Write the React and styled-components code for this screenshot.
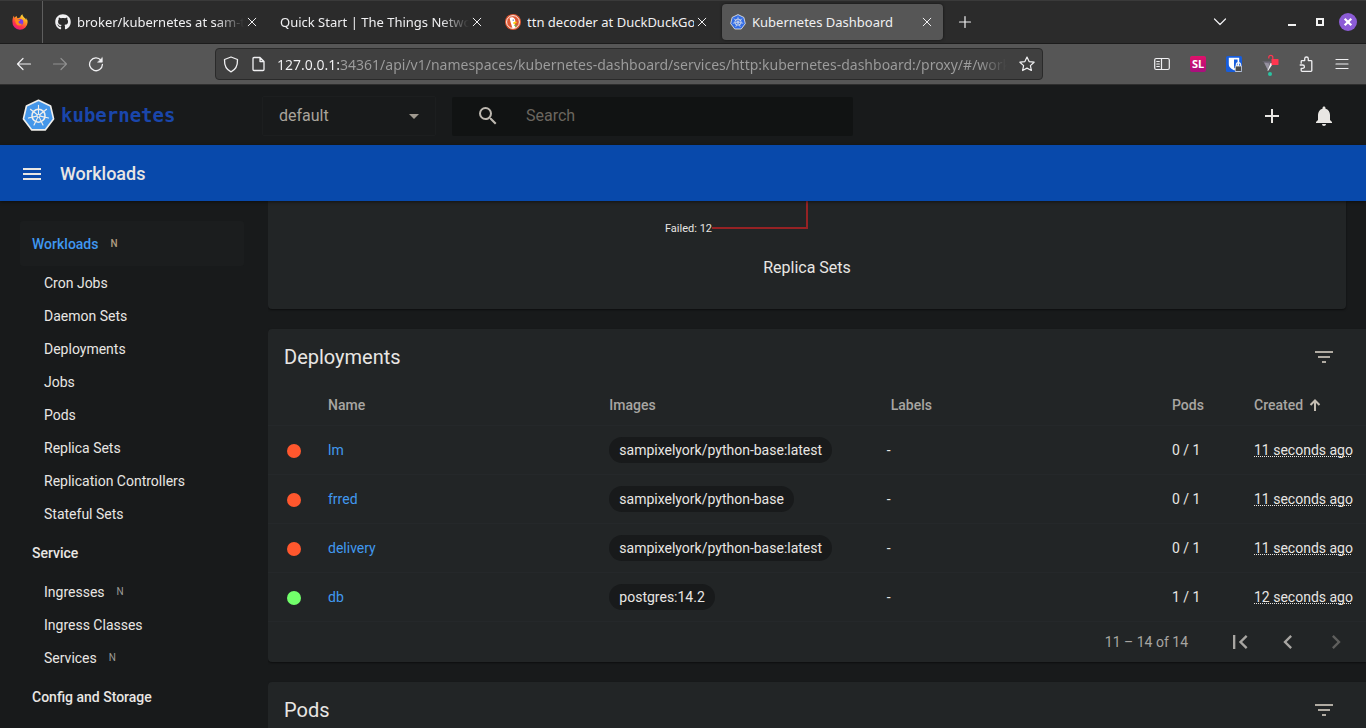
import React from "react";
import styled, { createGlobalStyle, css } from "styled-components";
import { FaGithub } from "react-icons/fa";
import {
  MdAdd,
  MdArrowDropDown,
  MdChevronLeft,
  MdChevronRight,
  MdFilterList,
  MdFirstPage,
  MdMenu,
  MdNotifications,
  MdSearch,
} from "react-icons/md";

const GlobalStyle = createGlobalStyle`
  *, *::before, *::after { box-sizing: border-box; }
  body {
    margin: 0;
    background: #181a1b;
    color: #e8e6e3;
    font: 14px/20px Roboto, "Liberation Sans", sans-serif;
  }
  button, input, select { font: inherit; color: inherit; }
  a { color: inherit; text-decoration: none; }
`;

const Shell = styled.div`
  display: flex;
  flex-direction: column;
  height: 100vh;
  overflow: hidden;
`;

/* ---------- browser window ---------- */

const Chrome = styled.div`
  flex: none;
  font-family: "Noto Sans", "Open Sans", sans-serif;
  color: #f0f0f2;
`;

const TabStrip = styled.div`
  display: flex;
  align-items: center;
  height: 44px;
  background: #2b2b2b;
  border-top: 1px solid #3a3a3a;
  border-bottom: 1px solid #1c1c1c;
`;

const PinnedTab = styled.button`
  display: flex;
  align-items: center;
  justify-content: center;
  align-self: stretch;
  width: 43px;
  padding: 0 3px 0 0;
  margin-right: 4px;
  background: none;
  border: 0;
  border-right: 1px solid #5e5e5e;
`;

const Tab = styled.div`
  display: flex;
  align-items: center;
  flex: 0 1 221px;
  min-width: 0;
  height: 36px;
  margin-right: 4px;
  padding: 0 8px;
  border-radius: 4px;
  ${(p) =>
    p.$active &&
    css`
      background: #565656;
      box-shadow: 0 0 3px rgba(0, 0, 0, 0.6);
    `}
`;

const TabTitle = styled.button`
  display: flex;
  align-items: center;
  gap: 6px;
  flex: 1;
  min-width: 0;
  padding: 0;
  background: none;
  border: 0;
  font-size: 13px;
  line-height: 20px;
  text-align: left;
  svg { flex: none; }
  span {
    flex: 1;
    min-width: 0;
    overflow: hidden;
    white-space: nowrap;
    ${(p) =>
      p.$fade &&
      css`
        mask-image: linear-gradient(to left, transparent, #000 28px);
      `}
  }
`;

const PlainButton = styled.button`
  display: flex;
  flex: none;
  align-items: center;
  justify-content: center;
  width: ${(p) => p.$w || 36}px;
  height: ${(p) => p.$h || p.$w || 36}px;
  padding: 0;
  background: none;
  border: 0;
  color: ${(p) => p.$color || "inherit"};
`;

const WindowControls = styled.div`
  display: flex;
  align-items: center;
  margin-left: auto;
  padding-right: 4px;
`;

const ListAllTabs = styled(PlainButton)`
  margin-right: 40px;
`;

const Toolbar = styled.div`
  display: flex;
  align-items: center;
  height: 41px;
  padding: 0 6px;
  background: #565656;
  border-bottom: 1px solid #2e2e2e;
`;

const FlexSpace = styled.div`
  flex: 0 1 101px;
`;

const UrlBar = styled.div`
  display: flex;
  align-items: center;
  flex: 1;
  min-width: 0;
  height: 32px;
  padding: 0 7px;
  gap: 12px;
  background: #404040;
  border: 1px solid #2a2a2a;
  border-radius: 4px;
  svg { flex: none; }
`;

const UrlInput = styled.input`
  flex: 1;
  min-width: 0;
  height: 24px;
  padding: 0;
  border: 0;
  outline: 0;
  font-size: 14px;
  color: transparent;
  background: linear-gradient(
    90deg,
    #f4f4f6 0 62px,
    #9d9d9d 62px calc(100% - 28px),
    transparent
  );
  background-clip: text;
  -webkit-background-clip: text;
`;

/* ---------- dashboard header ---------- */

const TopBar = styled.header`
  display: flex;
  flex: none;
  align-items: center;
  height: 60px;
  padding: 2px 22px 0;
`;

const Brand = styled.a`
  display: flex;
  align-items: center;
  gap: 6px;
  width: 240px;
  padding-bottom: 2px;
  color: #1a46ab;
  font: bold 19px/24px "DejaVu Sans Mono", monospace;
`;

const NamespaceBox = styled.div`
  display: grid;
  align-items: center;
  width: 174px;
  height: 40px;
  margin-right: 16px;
  border: 1px solid #1c1e1f;
  border-radius: 2px;
  > * { grid-area: 1 / 1; }
  svg {
    justify-self: end;
    margin-right: 9px;
    color: #a09a90;
    pointer-events: none;
  }
`;

const NamespaceSelect = styled.select`
  appearance: none;
  width: 100%;
  height: 38px;
  padding: 0 16px;
  background: transparent;
  border: 0;
  font-size: 16px;
  color: #a9a49c;
`;

const SearchBox = styled.form`
  display: flex;
  align-items: center;
  flex: 0 1 401px;
  height: 39px;
  padding-left: 24px;
  gap: 26px;
  background: #111313;
  border-radius: 2px;
  color: #bdb8b0;
  svg { flex: none; }
`;

const SearchInput = styled.input`
  flex: 1;
  min-width: 0;
  padding: 0;
  background: none;
  border: 0;
  outline: 0;
  font-size: 16px;
  &::placeholder { color: #6b665f; opacity: 1; }
`;

const TopActions = styled.div`
  display: flex;
  gap: 12px;
  margin-left: auto;
`;

const TitleBar = styled.div`
  display: flex;
  flex: none;
  align-items: center;
  gap: 8px;
  height: 56px;
  padding: 2px 12px 0;
  background: #0849ab;
  z-index: 1;
  box-shadow: 0 1px 3px rgba(0, 0, 0, 0.5);
`;

const PageTitle = styled.h1`
  margin: 0;
  font-size: 18px;
  font-weight: 500;
  line-height: 24px;
`;

/* ---------- sidebar ---------- */

const Columns = styled.div`
  display: flex;
  flex: 1;
  min-height: 0;
`;

const Sidebar = styled.nav`
  flex: none;
  width: 268px;
  padding: 20px 24px 0 20px;
  overflow: hidden;
`;

const SectionLink = styled.a`
  display: flex;
  align-items: center;
  gap: 12px;
  height: 45px;
  padding: 0 12px;
  border-radius: 3px;
  font-weight: 500;
  color: ${(p) => (p.$active ? "#3f97f0" : "#e8e6e3")};
  background: ${(p) => (p.$active ? "#1b1d1e" : "transparent")};
`;

const NavLink = styled.a`
  display: flex;
  align-items: center;
  gap: 12px;
  height: 33px;
  padding: 0 24px;
`;

const Scope = styled.small`
  font-size: 10px;
  color: ${(p) => (p.$active ? "#b09c80" : "#9c9a96")};
`;

/* ---------- content ---------- */

const Content = styled.main`
  display: flex;
  flex-direction: column;
  flex: 1;
  gap: 20px;
  min-width: 0;
  overflow: hidden;
`;

const Card = styled.section`
  flex: none;
  background: #222526;
  border-radius: 4px 0 0 4px;
  box-shadow: 0 1px 2px rgba(0, 0, 0, 0.5);
`;

const StatusCard = styled(Card)`
  margin-right: 20px;
  padding-bottom: 29px;
  border-radius: 0 0 4px 4px;
`;

const Leader = styled.div`
  display: flex;
  align-items: flex-end;
  justify-content: flex-end;
  width: 50%;
  height: 35px;
  font-size: 11px;
  line-height: 14px;
  svg { margin: 0 -1px 7px 0; }
`;

const ChartTitle = styled.h2`
  margin: 0;
  padding: 20px 0 0;
  font-size: 16px;
  font-weight: 400;
  line-height: 24px;
  text-align: center;
`;

const CardHeader = styled.header`
  display: flex;
  align-items: center;
  justify-content: space-between;
  height: 56px;
  padding: 0 22px 0 16px;
`;

const CardTitle = styled.h2`
  margin: 0;
  font-size: 20px;
  font-weight: 400;
  line-height: 28px;
`;

const Table = styled.table`
  width: 100%;
  table-layout: fixed;
  border-collapse: separate;
  border-spacing: 0;
  text-align: left;
  white-space: nowrap;
  th, td {
    padding: 0;
    border-bottom: 1px solid #25282a;
  }
  th {
    height: 41px;
    font-weight: 500;
    color: #a8a6a2;
  }
  td { height: 49px; }
`;

const Col = styled.col`
  width: ${(p) => (p.$w ? `${p.$w}px` : "auto")};
`;

const SortButton = styled.button`
  display: flex;
  align-items: center;
  gap: 6px;
  padding: 0;
  background: none;
  border: 0;
  font-weight: 500;
`;

const Dot = styled.span`
  display: block;
  width: 14px;
  height: 14px;
  margin: 2px 0 0 19px;
  border-radius: 50%;
  background: ${(p) => (p.$ok ? "#72ff6b" : "#ff572d")};
`;

const NameLink = styled.a`
  color: #4199f0;
`;

const Chip = styled.span`
  display: inline-block;
  height: 26px;
  padding: 0 10px;
  border-radius: 13px;
  background: #181a1b;
  line-height: 26px;
`;

const DashCell = styled.td`
  text-indent: -4px;
`;

const Age = styled.time`
  text-decoration: underline dotted 1px;
  text-decoration-skip-ink: none;
  text-underline-offset: 1px;
`;

const Paginator = styled.footer`
  display: flex;
  align-items: center;
  justify-content: flex-end;
  height: 40px;
  padding-right: 6px;
  color: #a8a6a2;
  p { margin: 0 28px 0 0; }
`;

/* ---------- drawings ---------- */

const stroke = { fill: "none", stroke: "currentColor", strokeLinecap: "round", strokeLinejoin: "round" };

const CloseIcon = () => (
  <svg width="10" height="10" viewBox="0 0 10 10" {...stroke} strokeWidth="1">
    <path d="M1.2 1.2 8.8 8.8M8.8 1.2 1.2 8.8" />
  </svg>
);

const FirefoxIcon = () => (
  <svg width="16" height="16" viewBox="0 0 16 16">
    <defs>
      <linearGradient id="fx" x1="0.85" y1="0" x2="0.25" y2="1">
        <stop offset="0" stopColor="#fff44f" />
        <stop offset="0.35" stopColor="#ffa01e" />
        <stop offset="0.7" stopColor="#ff3647" />
        <stop offset="1" stopColor="#e31587" />
      </linearGradient>
    </defs>
    <path d="M15.4 6.2c-.4-1-1.200-2-1.800-2.300.5 1 .8 1.800.8 2.400C13.500 3.900 10.600 3.200 10.400.3 9 1 8.300 2.500 8.200 3.600c-.9.1-1.600.3-2.200.7C5 3.900 4.700 3 4.800 2c-1 .5-1.800 1.200-2.300 1.800C2 3.300 2 2.300 2.200 1.600 1 2.800.4 5.200.4 7.800a7.600 7.600 0 0 0 15.200.6c0-.8 0-1.500-.2-2.200z" fill="url(#fx)" />
    <circle cx="8.200" cy="8" r="3.100" fill="#7a3bea" />
    <path d="M3 5.400c1-.6 2.500-.5 3.600.1.700.2 1.300.3 1.600.8-.2.700-1.400.8-1.700 1.600.2 1.500 1.700 2.200 3.300 1.500 0 1.400-1.300 2.200-2.800 2.100C4.700 11.400 3.300 9.500 3 5.400z" fill="#ff8a1a" />
  </svg>
);

const DuckIcon = () => (
  <svg width="16" height="16" viewBox="0 0 16 16">
    <circle cx="8" cy="8" r="8" fill="#de5833" />
    <circle cx="8" cy="8" r="6.400" fill="none" stroke="#fff" strokeWidth=".9" />
    <path d="M4.600 4c1.200-1.100 3.800-.9 4.800.4.800.9 1 2 .9 3.500L9.600 10l.9 3.800-3 .5C6.500 11 5.200 7.400 4.600 4z" fill="#fff" />
    <path d="M8.600 8.200c1.300-.5 2.700-.6 3.400-.2.200.5-1 1-2.600 1.200.6.500 1.600.3 1.800.6-.3.600-2.200.6-2.800 0-.4-.5-.3-1.200.2-1.600z" fill="#fdd20a" />
    <circle cx="8.200" cy="6.100" r=".7" fill="#2d4f8e" />
    <path d="m8.700 11.400 2.600-.8v2.400z" fill="#65bc46" />
  </svg>
);

const HEPTAGON = "16,1.200 27.700,6.800 30.600,19.300 22.500,30 9.500,30 1.400,19.300 4.300,6.800";

const KubernetesIcon = ({ size, fill }) => (
  <svg width={size} height={size} viewBox="0 0 32 32" fill="none" stroke="#f0efec">
    <polygon points={HEPTAGON} fill={fill} strokeWidth="1.600" strokeLinejoin="round" />
    <circle cx="16" cy="16.200" r="6.300" strokeWidth="1.500" />
    {[0, 1, 2, 3, 4, 5, 6].map((i) => (
      <path key={i} d="M16 14.400V6.200" strokeWidth="1.100" strokeLinecap="round" transform={`rotate(${(i * 360) / 7} 16 16.200)`} />
    ))}
    <circle cx="16" cy="16.200" r="1.500" strokeWidth="1" />
  </svg>
);

const ArrowIcon = ({ flip }) => (
  <svg width="16" height="16" viewBox="0 0 16 16" {...stroke} strokeWidth="1.200">
    <path d={flip ? "M1.500 8h13M9 2.500 14.500 8 9 13.500" : "M14.500 8h-13M7 2.500 1.500 8 7 13.500"} />
  </svg>
);

const ReloadIcon = () => (
  <svg width="16" height="16" viewBox="0 0 16 16" {...stroke} strokeWidth="1.300">
    <path d="M13 4.300A6.400 6.400 0 1 0 14.400 8.500" />
    <path d="M14.300 1.800v4.400H9.900z" fill="currentColor" strokeWidth=".6" />
  </svg>
);

const ShieldIcon = () => (
  <svg width="16" height="17" viewBox="0 0 16 17" {...stroke} strokeWidth="1.300">
    <path d="M8 1 14.500 3.500c.2 5.500-1.300 10-6.500 12.300C2.800 13.500 1.300 9 1.500 3.500z" />
  </svg>
);

const PageIcon = () => (
  <svg width="14" height="16" viewBox="0 0 14 16" {...stroke} strokeWidth="1.300">
    <path d="M3 1.500H9L13 5.500v8a1 1 0 0 1-1 1h-9a1 1 0 0 1-1-1v-11a1 1 0 0 1 1-1zM9 1.500v4h4" />
  </svg>
);

const StarIcon = () => (
  <svg width="16" height="16" viewBox="0 0 16 16" {...stroke} strokeWidth="1.200">
    <path d="m8 1 2.100 4.600 5 .6-3.700 3.400 1 4.900L8 12.100l-4.400 2.400 1-4.900L.9 6.200l5-.6z" />
  </svg>
);

const SidebarIcon = () => (
  <svg width="16" height="16" viewBox="0 0 16 16" {...stroke} strokeWidth="1.200">
    <rect x=".7" y="2.500" width="14.600" height="11" rx="1.500" />
    <path d="M7.500 2.500v11M2.800 5.500h2.500M2.800 8h2.500M2.800 10.500h2.500" />
  </svg>
);

const SlBadge = styled.span`
  width: 16px;
  height: 16px;
  border-radius: 2px;
  background: linear-gradient(#e0116a, #a80f7e);
  color: #fff;
  font: bold 11px/16px "Noto Sans", sans-serif;
  text-align: center;
`;

const BitwardenIcon = () => (
  <svg width="16" height="16" viewBox="0 0 16 16">
    <rect width="16" height="16" rx="1.500" fill="#175ddc" />
    <path d="M2.800 1.800h10.400v6.400c0 3.300-3.200 5-5.200 6-2-1-5.200-2.700-5.200-6z" fill="#fff" />
    <path d="M8 3.400h3.600v4.800c0 2-1.900 3.400-3.600 4.300z" fill="#175ddc" />
    <path d="M10.300 10.500V8.800a2.200 2.200 0 0 1 4.400 0v1.700" fill="none" stroke="#f2f2f2" strokeWidth="1.100" />
    <rect x="9.200" y="10" width="6.500" height="5.600" rx=".8" fill="#4a4a4a" stroke="#f2f2f2" strokeWidth=".8" />
  </svg>
);

const FilterExtensionIcon = () => (
  <svg width="18" height="24" viewBox="0 0 18 24">
    <path d="M1 9.500h9.500L8 12.500z" fill="#716c7c" />
    <path d="m3 10.500 5.500 1-1.500 7z" fill="#96919f" />
    <path d="m12 11.500-5 7.500-.5-.5 3-7.500z" fill="#efedf3" />
    <path d="M7.800 6.500V5.300a2 2 0 0 1 4 0V7" fill="none" stroke="#ff3650" strokeWidth="1.200" />
    <rect x="10.500" y="7" width="7" height="6" rx=".6" fill="#ff3650" />
    <circle cx="9" cy="22" r="2" fill="#2ac3a2" />
  </svg>
);

const PuzzleIcon = () => (
  <svg width="16" height="16" viewBox="0 0 16 16" {...stroke} strokeWidth="1.300">
    <path d="M3.200 7.200V5.400a.8.8 0 0 1 .8-.8h2.700V2.800a1.800 1.800 0 0 1 3.600 0v1.800h2.700a.8.8 0 0 1 .8.800v9.100a.8.800 0 0 1-.8.800H4a.8.800 0 0 1-.8-.8v-2.100h1.500a1.600 1.600 0 0 0 0-3.400H2.200" />
  </svg>
);

const HamburgerIcon = () => (
  <svg width="14" height="14" viewBox="0 0 14 14" {...stroke} strokeWidth="1.200">
    <path d="M1 2.500h12M1 7h12M1 11.500h12" />
  </svg>
);

const PlusIcon = () => (
  <svg width="14" height="14" viewBox="0 0 14 14" {...stroke} strokeWidth="1.200">
    <path d="M7 1.500v11M1.500 7h11" />
  </svg>
);

const ChevronDownIcon = () => (
  <svg width="14" height="10" viewBox="0 0 14 10" {...stroke} strokeWidth="1.200">
    <path d="m1.500 2 5.500 5.500L12.500 2" />
  </svg>
);

const SortUpIcon = () => (
  <svg width="12" height="12" viewBox="0 0 12 12" fill="none" stroke="#c4bdb2" strokeWidth="2">
    <path d="M6 12V1.500M1.500 6 6 1.500 10.500 6" />
  </svg>
);

const MinimizeIcon = () => (
  <svg width="8" height="8" viewBox="0 0 8 8">
    <path d="M0 6h8v2H0z" fill="#f2f2f2" />
  </svg>
);

const MaximizeIcon = () => (
  <svg width="8" height="8" viewBox="0 0 8 8">
    <rect x="1" y="1" width="6" height="6" fill="none" stroke="#f2f2f2" strokeWidth="2" />
  </svg>
);

const CloseWindowIcon = () => (
  <svg width="18" height="18" viewBox="0 0 18 18">
    <circle cx="9" cy="9" r="9" fill="#8c5cd6" />
    <path d="m5.700 5.700 6.600 6.600m0-6.600-6.600 6.600" stroke="#fff" strokeWidth="2.200" />
  </svg>
);

/* ---------- data ---------- */

const tabs = [
  { title: "broker/kubernetes at sam-test", icon: <FaGithub size={16} />, fade: true },
  { title: "Quick Start | The Things Network", fade: true },
  { title: "ttn decoder at DuckDuckGo", icon: <DuckIcon /> },
  { title: "Kubernetes Dashboard", icon: <KubernetesIcon size={16} fill="#326ce5" />, active: true },
];

const nav = [
  {
    title: "Workloads",
    scoped: true,
    active: true,
    items: [
      ["Cron Jobs"],
      ["Daemon Sets"],
      ["Deployments"],
      ["Jobs"],
      ["Pods"],
      ["Replica Sets"],
      ["Replication Controllers"],
      ["Stateful Sets"],
    ],
  },
  { title: "Service", items: [["Ingresses", true], ["Ingress Classes"], ["Services", true]] },
  { title: "Config and Storage", items: [] },
];

const deployments = [
  { name: "lm", image: "sampixelyork/python-base:latest", pods: "0 / 1", age: "11 seconds ago" },
  { name: "frred", image: "sampixelyork/python-base", pods: "0 / 1", age: "11 seconds ago" },
  { name: "delivery", image: "sampixelyork/python-base:latest", pods: "0 / 1", age: "11 seconds ago" },
  { name: "db", image: "postgres:14.2", pods: "1 / 1", age: "12 seconds ago", ok: true },
];

const url =
  "127.0.0.1:34361/api/v1/namespaces/kubernetes-dashboard/services/http:kubernetes-dashboard:/proxy/#/workloads?namespace=default";

function BrowserChrome() {
  return (
    <Chrome>
      <TabStrip>
        <PinnedTab aria-label="Firefox View"><FirefoxIcon /></PinnedTab>
        {tabs.map((t) => (
          <Tab key={t.title} $active={t.active}>
            <TabTitle $fade={t.fade}>
              {t.icon}
              <span>{t.title}</span>
            </TabTitle>
            <PlainButton $w={16} aria-label="Close tab"><CloseIcon /></PlainButton>
          </Tab>
        ))}
        <PlainButton aria-label="New tab"><PlusIcon /></PlainButton>
        <WindowControls>
          <ListAllTabs aria-label="List all tabs"><ChevronDownIcon /></ListAllTabs>
          <PlainButton $w={28} aria-label="Minimize"><MinimizeIcon /></PlainButton>
          <PlainButton $w={28} aria-label="Maximize"><MaximizeIcon /></PlainButton>
          <PlainButton $w={28} aria-label="Close window"><CloseWindowIcon /></PlainButton>
        </WindowControls>
      </TabStrip>
      <Toolbar>
        <PlainButton aria-label="Back"><ArrowIcon /></PlainButton>
        <PlainButton aria-label="Forward" $color="#8f8f8f"><ArrowIcon flip /></PlainButton>
        <PlainButton aria-label="Reload"><ReloadIcon /></PlainButton>
        <FlexSpace />
        <UrlBar>
          <ShieldIcon />
          <PageIcon />
          <UrlInput aria-label="Address" defaultValue={url} spellCheck={false} />
          <StarIcon />
        </UrlBar>
        <FlexSpace />
        <PlainButton aria-label="Sidebars"><SidebarIcon /></PlainButton>
        <PlainButton><SlBadge>SL</SlBadge></PlainButton>
        <PlainButton aria-label="Bitwarden"><BitwardenIcon /></PlainButton>
        <PlainButton aria-label="Content filter"><FilterExtensionIcon /></PlainButton>
        <PlainButton aria-label="Extensions"><PuzzleIcon /></PlainButton>
        <PlainButton aria-label="Menu"><HamburgerIcon /></PlainButton>
      </Toolbar>
    </Chrome>
  );
}

function DeploymentsCard() {
  return (
    <Card>
      <CardHeader>
        <CardTitle>Deployments</CardTitle>
        <PlainButton $w={40} $color="#b0aba2" aria-label="Filter deployments"><MdFilterList size={24} /></PlainButton>
      </CardHeader>
      <Table>
        <colgroup>
          <Col $w={60} />
          <Col />
          <Col />
          <Col />
          <Col $w={82} />
          <Col $w={112} />
        </colgroup>
        <thead>
          <tr>
            <th aria-label="Status" />
            <th>Name</th>
            <th>Images</th>
            <th>Labels</th>
            <th>Pods</th>
            <th><SortButton>Created <SortUpIcon /></SortButton></th>
          </tr>
        </thead>
        <tbody>
          {deployments.map((d) => (
            <tr key={d.name}>
              <td><Dot $ok={d.ok} /></td>
              <td><NameLink href="#">{d.name}</NameLink></td>
              <td><Chip>{d.image}</Chip></td>
              <DashCell>-</DashCell>
              <td>{d.pods}</td>
              <td><Age>{d.age}</Age></td>
            </tr>
          ))}
        </tbody>
      </Table>
      <Paginator>
        <p>11 – 14 of 14</p>
        <PlainButton $w={48} $h={40} aria-label="First page"><MdFirstPage size={28} /></PlainButton>
        <PlainButton $w={48} $h={40} aria-label="Previous page"><MdChevronLeft size={28} /></PlainButton>
        <PlainButton $w={48} $h={40} $color="#5f5f5d" aria-label="Next page" disabled><MdChevronRight size={28} /></PlainButton>
      </Paginator>
    </Card>
  );
}

export default function App() {
  return (
    <Shell>
      <GlobalStyle />
      <BrowserChrome />
      <TopBar>
        <Brand href="#"><KubernetesIcon size={33} fill="#4597ea" />kubernetes</Brand>
        <NamespaceBox>
          <NamespaceSelect aria-label="Namespace"><option>default</option></NamespaceSelect>
          <MdArrowDropDown size={24} />
        </NamespaceBox>
        <SearchBox>
          <MdSearch size={24} />
          <SearchInput type="search" placeholder="Search" aria-label="Search" />
        </SearchBox>
        <TopActions>
          <PlainButton $w={40} aria-label="Create"><MdAdd size={24} /></PlainButton>
          <PlainButton $w={40} aria-label="Notifications"><MdNotifications size={24} /></PlainButton>
        </TopActions>
      </TopBar>
      <TitleBar>
        <PlainButton $w={40} aria-label="Toggle navigation"><MdMenu size={24} /></PlainButton>
        <PageTitle>Workloads</PageTitle>
      </TitleBar>
      <Columns>
        <Sidebar>
          {nav.map((s) => (
            <React.Fragment key={s.title}>
              <SectionLink href="#" $active={s.active}>
                {s.title}
                {s.scoped && <Scope $active>N</Scope>}
              </SectionLink>
              {s.items.map(([label, scoped]) => (
                <NavLink href="#" key={label}>
                  {label}
                  {scoped && <Scope>N</Scope>}
                </NavLink>
              ))}
            </React.Fragment>
          ))}
        </Sidebar>
        <Content>
          <StatusCard>
            <Leader>
              Failed: 12
              <svg width="96" height="28" viewBox="0 0 96 28">
                <path d="M0 27h95V0" fill="none" stroke="#962224" strokeWidth="2" />
              </svg>
            </Leader>
            <ChartTitle>Replica Sets</ChartTitle>
          </StatusCard>
          <DeploymentsCard />
          <Card>
            <CardHeader>
              <CardTitle>Pods</CardTitle>
              <PlainButton $w={40} $color="#b0aba2" aria-label="Filter pods"><MdFilterList size={24} /></PlainButton>
            </CardHeader>
          </Card>
        </Content>
      </Columns>
    </Shell>
  );
}
